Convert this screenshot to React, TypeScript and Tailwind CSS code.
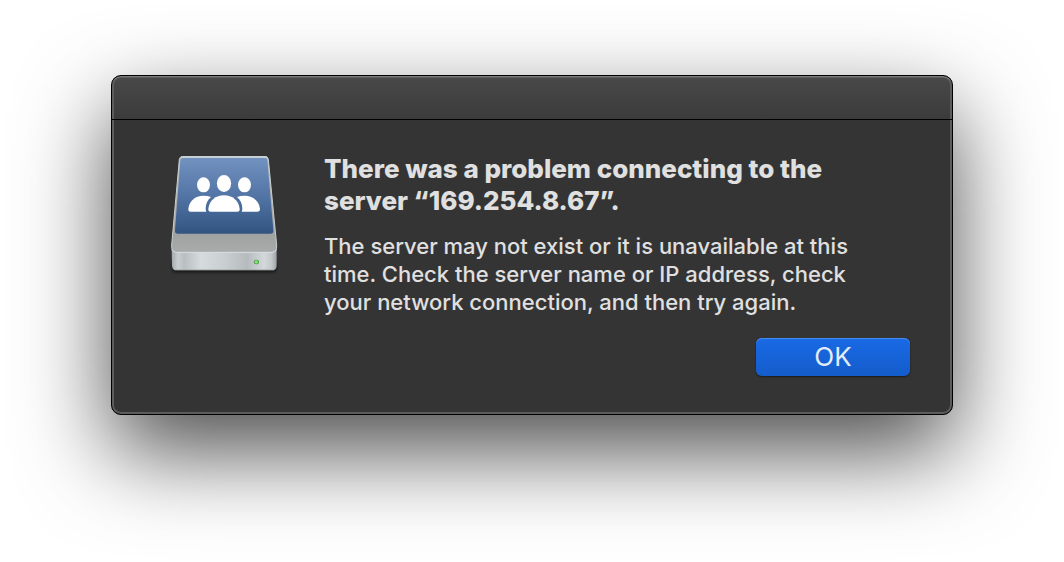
import { useState } from 'react'

function ServerDriveIcon() {
  return (
    <svg viewBox="15 24 360 366" className="w-[120px] h-[122px] shrink-0" aria-hidden="true">
      <defs>
        <linearGradient id="screen" x1="0" y1="0" x2="0" y2="1">
          <stop offset="0" stopColor="#7292bf" />
          <stop offset="0.5" stopColor="#5375a6" />
          <stop offset="1" stopColor="#31547f" />
        </linearGradient>
        <linearGradient id="top" x1="0" y1="0" x2="0" y2="1">
          <stop offset="0" stopColor="#b9c0c2" />
          <stop offset="0.8" stopColor="#a0a2a2" />
          <stop offset="1" stopColor="#a9abac" />
        </linearGradient>
        <linearGradient id="front" x1="0" y1="0" x2="1" y2="0">
          <stop offset="0" stopColor="#a4a9ab" />
          <stop offset="0.06" stopColor="#c9ced0" />
          <stop offset="0.12" stopColor="#b9bec0" />
          <stop offset="0.28" stopColor="#d6dcde" />
          <stop offset="0.5" stopColor="#c9cfd1" />
          <stop offset="0.72" stopColor="#b6bbbd" />
          <stop offset="0.88" stopColor="#d3d9db" />
          <stop offset="0.95" stopColor="#c3c8ca" />
          <stop offset="1" stopColor="#9da2a4" />
        </linearGradient>
        <filter id="soft" x="-10%" y="-50%" width="120%" height="200%">
          <feGaussianBlur stdDeviation="4" />
        </filter>
      </defs>

      {/* Ground shadow */}
      <rect x="36" y="345" width="314" height="37" rx="12" fill="#000" opacity="0.6" filter="url(#soft)" />

      {/* Lid */}
      <path
        d="M68 35H316Q324 35 325 43L350 300Q351 323 338 324H47Q34 323 35 300L58 43Q59 35 68 35Z"
        fill="url(#top)"
        stroke="#c7cdcf"
        strokeWidth="3"
      />
      <path d="M71 38H313Q321 38 322 46L340 256Q341 266 331 266H54Q44 266 45 256L61 46Q62 38 71 38Z" fill="url(#screen)" />
      <path d="M64 36H320" stroke="#dfe7ec" strokeWidth="3" strokeLinecap="round" />

      {/* Front */}
      <path d="M35 312Q37 322 48 322H337Q348 322 350 312V362Q349 376 336 376H50Q37 376 36 362Z" fill="url(#front)" />
      <path d="M36 313Q39 322 49 322H336Q346 322 349 313" fill="none" stroke="#d9dfe1" strokeWidth="3" />
      <path d="M44 374H342" stroke="#a2a6a7" strokeWidth="2" />
      <ellipse cx="289" cy="351" rx="8" ry="7" fill="#5f8f55" />
      <ellipse cx="289" cy="351" rx="5" ry="5" fill="#6cf062" />

      {/* People */}
      <g fill="#fff">
        <ellipse cx="130.500" cy="119.500" rx="19.500" ry="22.500" />
        <ellipse cx="253.500" cy="119.500" rx="19.500" ry="22.500" />
        <ellipse cx="192" cy="115.500" rx="21.500" ry="25.500" />
        <path d="M92 200Q84 200 85 191C88 168 105 152 130 152Q143 152 153 156C143 164 137 177 137 191Q137 196 139 200Z" />
        <path d="M293 200Q301 200 300 191C297 168 279 152 254 152Q241 152 231 156C241 164 247 177 247 191Q247 196 245 200Z" />
        <path d="M152 200Q144 200 145 191C148 167 167 151 192 151C217 151 236 167 239 191Q240 200 232 200Z" />
      </g>
    </svg>
  )
}

export default function App() {
  const [open, setOpen] = useState(true)

  return (
    <main className="flex min-h-screen items-center justify-center overflow-hidden bg-white px-6 pb-[72px] font-['Inter',sans-serif]">
      {open && (
        <div
          role="alertdialog"
          aria-labelledby="alert-title"
          aria-describedby="alert-message"
          className="w-full max-w-[842px] rounded-[10px] border border-black bg-[#343434] bg-[linear-gradient(#494949,#3b3b3b_43px,#343434_43px)] text-[#e0e0e0] shadow-[inset_0_1px_0_#7c7c7c,inset_0_0_0_2px_#5c5c5c,0_36px_90px_rgba(0,0,0,0.7)]"
        >
          {/* Title bar */}
          <div className="h-11 border-b border-black" />

          <div className="pt-[33px] pr-[42px] pb-[38px] pl-[53px]">
            <div className="flex items-start gap-[39px]">
              <ServerDriveIcon />
              <div className="max-w-[530px]">
                <h1 id="alert-title" className="text-[26px] leading-8 font-extrabold">
                  There was a problem connecting to the server “169.254.8.67”.
                </h1>
                <p id="alert-message" className="mt-[15px] text-[22px] leading-7 font-medium">
                  The server may not exist or it is unavailable at this time. Check the server name or IP address, check
                  your network connection, and then try again.
                </p>
              </div>
            </div>

            {/* Actions */}
            <div className="mt-[22px] flex justify-end">
              <button
                type="button"
                onClick={() => setOpen(false)}
                className="h-[38px] w-[154px] rounded-md bg-linear-to-b from-[#196ae6] to-[#145ccb] text-[26px] leading-8 text-[#e3ecfb] shadow-[inset_0_1px_0_#4a8bee,0_1px_2px_rgba(0,0,0,0.5)]"
              >
                OK
              </button>
            </div>
          </div>
        </div>
      )}
    </main>
  )
}
